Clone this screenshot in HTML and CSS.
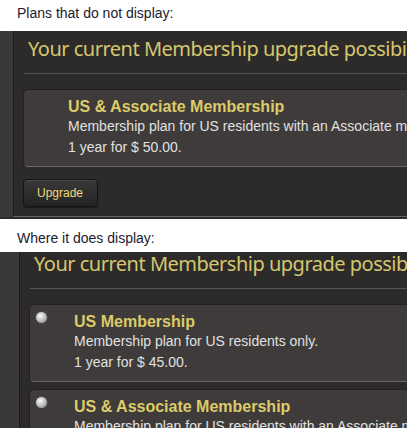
FILE: index.html
```html
<!DOCTYPE html>
<html lang="en">
<head>
<meta charset="utf-8">
<title>Membership upgrade</title>
<link rel="stylesheet" href="styles.css">
</head>
<body>
<div class="caption caption--first">Plans that do not display:</div>
<section class="panel panel--a">
  <div class="strip"></div>
  <div class="main">
    <h2 class="heading">Your current Membership upgrade possibilities:</h2>
    <div class="rule"></div>
    <div class="plan">
      <div class="slot"></div>
      <div class="info">
        <div class="plan-title">US &amp; Associate Membership</div>
        <div class="plan-desc">Membership plan for US residents with an Associate membership.</div>
        <div class="plan-desc">1 year for $ 50.00.</div>
      </div>
    </div>
    <button class="upgrade" type="button">Upgrade</button>
  </div>
</section>
<div class="caption caption--second">Where it does display:</div>
<section class="panel panel--b">
  <div class="strip"></div>
  <div class="main">
    <h2 class="heading">Your current Membership upgrade possibilities:</h2>
    <div class="rule"></div>
    <div class="plan">
      <div class="slot"><span class="radio"></span></div>
      <div class="info">
        <div class="plan-title">US Membership</div>
        <div class="plan-desc">Membership plan for US residents only.</div>
        <div class="plan-desc">1 year for $ 45.00.</div>
      </div>
    </div>
    <div class="plan plan--next">
      <div class="slot"><span class="radio"></span></div>
      <div class="info">
        <div class="plan-title">US &amp; Associate Membership</div>
        <div class="plan-desc">Membership plan for US residents with an Associate membership.</div>
        <div class="plan-desc">1 year for $ 50.00.</div>
      </div>
    </div>
  </div>
</section>
</body>
</html>
```
FILE: styles.css
```css
html, body {
  margin: 0;
  padding: 0;
  background: #ffffff;
}
body {
  width: 407px;
  height: 428px;
  overflow: hidden;
  font-family: "Liberation Sans", Arial, sans-serif;
}
.caption {
  font-size: 14px;
  line-height: 16px;
  color: #1b2030;
  padding-left: 17px;
}
.caption--first {
  padding-top: 5px;
  padding-bottom: 10px;
}
.caption--second {
  padding-top: 11px;
  padding-bottom: 6px;
}
.panel {
  display: flex;
  overflow: hidden;
  background: #2c2b2a;
}
.panel--a {
  padding-bottom: 2px;
}
.panel--a .strip {
  width: 13px;
}
.panel--b .strip {
  width: 19px;
}
.strip {
  flex: none;
  background: #3a3938;
}
.main {
  flex: none;
  width: 620px;
  box-sizing: border-box;
  border-left: 1px solid #1c1b1b;
  padding-left: 9px;
  background: #2c2b2a;
}
.panel--a .main {
  padding-top: 6px;
  padding-bottom: 9px;
  border-bottom: 1px solid #676665;
}
.panel--b .main {
  padding-top: 0;
}
.heading {
  margin: 0;
  padding-left: 5px;
  font-family: "Noto Sans", "Open Sans", sans-serif;
  font-weight: normal;
  font-size: 20px;
  letter-spacing: -0.5px;
  line-height: 24px;
  color: #d6c66e;
  white-space: nowrap;
}
.rule {
  margin-top: 12px;
  margin-left: 1px;
  height: 1px;
  background: #575554;
}
.plan {
  margin-top: 15px;
  display: flex;
  background: #3e3b3a;
  border: 1px solid #222020;
  border-bottom-color: #6a6867;
  border-radius: 5px;
  padding: 7px 0 8px 5px;
}
.plan--next {
  margin-top: 7px;
}
.slot {
  flex: none;
  width: 12px;
  margin-right: 27px;
}
.radio {
  display: block;
  width: 13px;
  height: 13px;
  margin-top: -1px;
  box-sizing: border-box;
  border-radius: 50%;
  border: 1px solid #4a4948;
  background: radial-gradient(circle at 40% 36%, #ffffff 0, #dcdcdc 25%, #a9a9a9 65%, #808080 100%);
}
.info {
  white-space: nowrap;
}
.plan-title {
  font-weight: bold;
  font-size: 16px;
  line-height: 19px;
  color: #dccb68;
}
.plan-desc {
  font-size: 14px;
  line-height: 21px;
  color: #e1e1e1;
}
.upgrade {
  display: block;
  margin-top: 12px;
  width: 75px;
  height: 28px;
  padding: 0 0 0 13px;
  text-align: left;
  font-family: "Liberation Sans", Arial, sans-serif;
  font-size: 12px;
  color: #ecda7a;
  border: 1px solid #141414;
  border-radius: 4px;
  background: linear-gradient(#393939, #232323);
  box-shadow: inset 0 1px 0 rgba(255, 255, 255, 0.08), 0 1px 1px rgba(0, 0, 0, 0.4);
}
```
